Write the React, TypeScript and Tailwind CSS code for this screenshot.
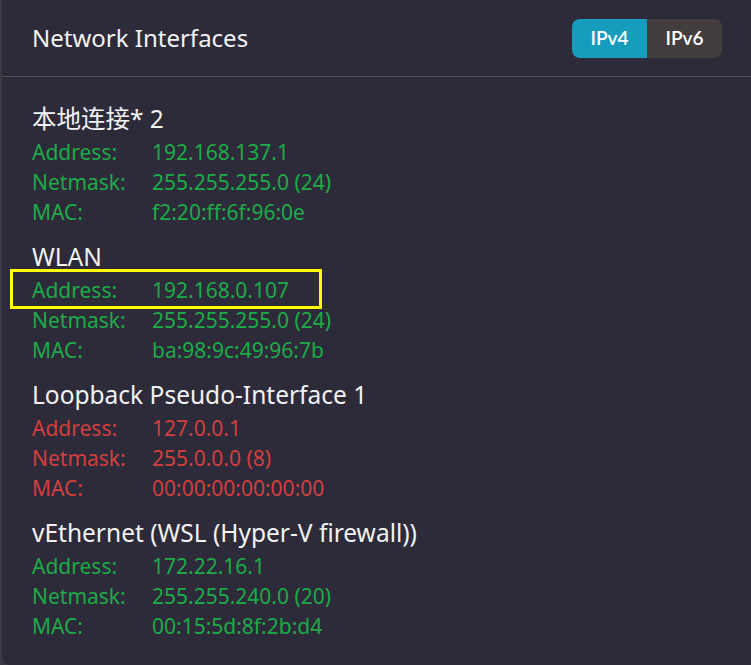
import React from "react";

type Iface = {
  name: string;
  address: string;
  netmask: string;
  mac: string;
  loopback?: boolean;
  highlight?: boolean;
};

const data: Iface[] = [
  { name: "本地连接* 2", address: "192.168.137.1", netmask: "255.255.255.0 (24)", mac: "f2:20:ff:6f:96:0e" },
  { name: "WLAN", address: "192.168.0.107", netmask: "255.255.255.0 (24)", mac: "ba:98:9c:49:96:7b", highlight: true },
  { name: "Loopback Pseudo-Interface 1", address: "127.0.0.1", netmask: "255.0.0.0 (8)", mac: "00:00:00:00:00:00", loopback: true },
  { name: "vEthernet (WSL (Hyper-V firewall))", address: "172.22.16.1", netmask: "255.255.240.0 (20)", mac: "00:15:5d:8f:2b:d4" },
];

function Row({ label, value, red, highlight }: { label: string; value: string; red?: boolean; highlight?: boolean }) {
  return (
    <div className={`relative flex h-[30px] items-center pt-[2px] text-[21px] ${red ? "text-[#d23f3f]" : "text-[#1eaa48]"}`}>
      <span className="w-[120px]">{label}</span>
      <span>{value}</span>
      {highlight && (
        <div className="absolute left-[-22px] top-[-6px] h-[40px] w-[312px] border-[3px] border-[#ffff00]" />
      )}
    </div>
  );
}

export default function App() {
  return (
    <div className="h-[665px] w-[751px] overflow-hidden bg-[#3b3a42]" style={{ fontFamily: '"Noto Sans", "Noto Sans CJK SC", sans-serif' }}>
      <div className="ml-[2px] h-full rounded-bl-[8px] bg-[#2d2b39]">
        <div className="flex h-[76px] items-center justify-between pl-[30px] pr-[29px]">
          <h1 className="text-[24px] text-[#f2f2f2]">Network Interfaces</h1>
          <div className="flex h-[39px] overflow-hidden rounded-[8px] text-[19px] font-semibold text-white" style={{ fontFamily: 'Lato, "Noto Sans", sans-serif' }}>
            <div className="flex w-[75px] items-center justify-center bg-[#169cbd]">IPv4</div>
            <div className="flex w-[75px] items-center justify-center bg-[#433e3d]">IPv6</div>
          </div>
        </div>
        <div className="h-px bg-[#57514f]" />
        <div className="flex flex-col gap-[15px] pl-[30px] pt-[27px]">
          {data.map((d) => (
            <div key={d.name}>
              <div className="mb-[3px] flex h-[30px] items-center text-[24.5px] text-[#f2f2f2]">{d.name}</div>
              <Row label="Address:" value={d.address} red={d.loopback} highlight={d.highlight} />
              <Row label="Netmask:" value={d.netmask} red={d.loopback} />
              <Row label="MAC:" value={d.mac} red={d.loopback} />
            </div>
          ))}
        </div>
      </div>
    </div>
  );
}
